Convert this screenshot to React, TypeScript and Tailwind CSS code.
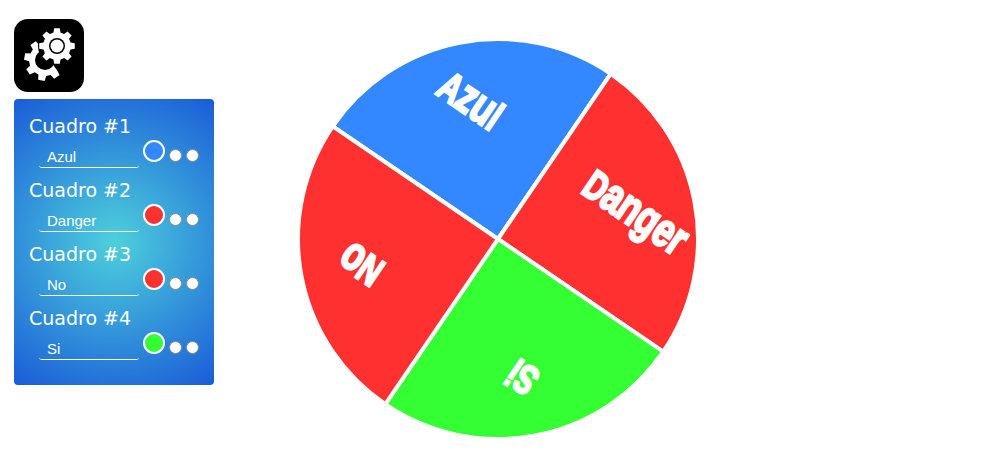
import React, { FC } from 'react'

const rows = [
    { title: 'Cuadro #1', value: 'Azul', swatch: 'bg-[#3388ff]' },
    { title: 'Cuadro #2', value: 'Danger', swatch: 'bg-[#ff3030]' },
    { title: 'Cuadro #3', value: 'No', swatch: 'bg-[#ff3030]' },
    { title: 'Cuadro #4', value: 'Si', swatch: 'bg-[#33ff33]' },
]

// builds a gear outline, teeth are trapezoids around the rim
const gearPath = (cx: number, cy: number, outer: number, inner: number, teeth: number, start: number, from = -360, to = 720) => {
    const pts: string[] = []
    const step = 360 / teeth
    const pt = (r: number, a: number) => {
        const t = (a * Math.PI) / 180
        return `${(cx + r * Math.cos(t)).toFixed(2)} ${(cy + r * Math.sin(t)).toFixed(2)}`
    }
    for (let i = 0; i < teeth; i++) {
        const a = start + i * step
        if (a < from || a > to) continue
        pts.push(pt(inner, a - step * 0.32), pt(outer, a - step * 0.2), pt(outer, a + step * 0.2), pt(inner, a + step * 0.32))
    }
    return 'M' + pts.join('L') + 'Z'
}

const GearIcon: FC = () => (
    <svg width="70" height="73" viewBox="0 0 70 73">
        <rect width="70" height="73" rx="14" fill="#000" />
        <path d={gearPath(31, 41, 21, 16, 8, 10, 50, 240)} fill="#fff" />
        <circle cx="31" cy="41" r="10" fill="#000" />
        <circle cx="43" cy="27" r="19" fill="#000" />
        <path d={gearPath(43, 27, 18, 14, 8, -90)} fill="#fff" />
        <circle cx="43" cy="27" r="8" fill="#000" />
        <circle cx="43" cy="27" r="6.5" fill="#fff" />
    </svg>
)

// lower is drawn a little bigger, the reference font has a tall x-height
const sectors = [
    { fill: '#3388ff', a: -55.7, x: -27, y: -139, rot: 34.3, parts: [['A', 0], ['zu', 1], ['l', 0]] },
    { fill: '#ff3030', a: 34.3, x: 138, y: -27, rot: 34.3, parts: [['D', 0], ['anger', 1]] },
    { fill: '#33ff33', a: 124.3, x: 24, y: 139, rot: 214.3, parts: [['S', 0], ['i', 0]] },
    { fill: '#ff3030', a: 214.3, x: -137, y: 26, rot: 214.3, parts: [['N', 0], ['o', 1]] },
] as const

const polar = (r: number, deg: number) => {
    const t = (deg * Math.PI) / 180
    return [r * Math.sin(t), -r * Math.cos(t)]
}

const Wheel: FC = () => (
    <svg width="400" height="400" viewBox="-200 -200 400 400">
        {sectors.map((s) => {
            const [x1, y1] = polar(200, s.a)
            const [x2, y2] = polar(200, s.a + 90)
            return <path key={s.a} d={`M0 0L${x1} ${y1}A200 200 0 0 1 ${x2} ${y2}Z`} fill={s.fill} stroke="#fff" strokeWidth="4" />
        })}
        {sectors.map((s) => (
            <g key={s.a} transform={`translate(${s.x} ${s.y}) rotate(${s.rot}) scale(0.72 1)`}>
                <text
                    y="15"
                    textAnchor="middle"
                    fontSize="41"
                    fontWeight="700"
                    fontFamily="'Liberation Sans', Arial, sans-serif"
                    fill="#fff"
                    stroke="#fff"
                    strokeWidth="2.6"
                >
                    {s.parts.map(([t, big]) => (
                        <tspan key={t} fontSize={big ? 48 : 41}>{t}</tspan>
                    ))}
                </text>
            </g>
        ))}
    </svg>
)

const App: FC = () => {
    return (
        <div className="flex w-[1000px] h-[456px] bg-white overflow-hidden">
            <div className="flex flex-col w-[200px] ml-[14px] pt-[19px]">
                <GearIcon />
                <div className="mt-[7px] h-[286px] w-[200px] rounded-[4px] bg-[radial-gradient(circle,#4dd0dc_0%,#1a5cd8_100%)] pt-[14px] pl-[15px] pr-[15px]">
                    {rows.map((r) => (
                        <div key={r.title} className="h-[64px]">
                            <div className="h-[26px] text-[19px] leading-[26px] text-white font-['DejaVu_Sans',sans-serif]">{r.title}</div>
                            <div className="flex items-start">
                                <div className="ml-[10px] mt-[2px] w-[100px] h-[27px] pl-[8px] pt-[6px] text-[15px] leading-[20px] text-white border-b border-white rounded-b-[3px] font-['Liberation_Sans',Arial,sans-serif]">
                                    {r.value}
                                </div>
                                <div className={`ml-[4px] mt-[1px] w-[22px] h-[22px] rounded-full border-2 border-white ${r.swatch}`} />
                                <div className="ml-[4px] mt-[10px] w-[13px] h-[13px] rounded-full bg-white border border-[#888]" />
                                <div className="ml-[4px] mt-[10px] w-[13px] h-[13px] rounded-full bg-white border border-[#888]" />
                            </div>
                        </div>
                    ))}
                </div>
            </div>
            <div className="ml-[84px] mt-[39px]">
                <Wheel />
            </div>
        </div>
    )
}

export default App
